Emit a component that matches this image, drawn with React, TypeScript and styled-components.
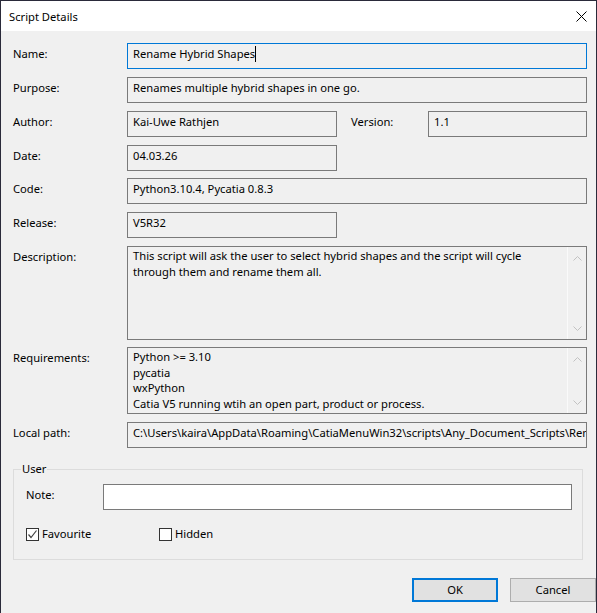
import React from "react";
import styled, { createGlobalStyle } from "styled-components";

const GlobalStyle = createGlobalStyle`
  html, body {
    margin: 0;
    padding: 0;
    background: #2a2a3a;
  }
  body {
    font-family: "Noto Sans", "Open Sans", sans-serif;
    font-size: 11.2px;
    color: #000;
  }
`;

const Window = styled.div`
  width: 597px;
  height: 613px;
  box-sizing: border-box;
  border: 1px solid #2a2a3a;
  border-bottom: none;
  background: #f0f0f0;
  display: flex;
  flex-direction: column;
  overflow: hidden;
`;

const TitleBar = styled.div`
  height: 30px;
  background: #fff;
  display: flex;
  align-items: center;
  justify-content: space-between;
  padding: 0 9px 0 8px;
  flex-shrink: 0;
`;

const Title = styled.span`
  line-height: 16px;
  padding-top: 1px;
`;

const CloseButton = styled.div`
  width: 12px;
  height: 12px;
  display: flex;
  align-items: center;
  justify-content: center;
`;

const Body = styled.div`
  padding: 12px 9px 0 12px;
  display: flex;
  flex-direction: column;
  gap: 8px;
`;

const Row = styled.div<{ $shift?: number }>`
  display: grid;
  grid-template-columns: 114px 1fr;
  align-items: start;
  ${(p) => (p.$shift ? `margin-top: ${p.$shift}px;` : "")}
`;

const Label = styled.div<{ $width?: number; $offset?: number }>`
  padding-top: 3px;
  line-height: 16px;
  white-space: nowrap;
  ${(p) => (p.$width ? `width: ${p.$width}px; flex-shrink: 0;` : "")}
  ${(p) => (p.$offset ? `margin-left: ${p.$offset}px;` : "")}
`;

const Inline = styled.div`
  display: flex;
  align-items: start;
`;

const Field = styled.div<{ $width?: number; $focused?: boolean; $white?: boolean }>`
  box-sizing: border-box;
  height: 26px;
  ${(p) => (p.$width ? `width: ${p.$width}px; flex-shrink: 0;` : "flex: 1;")}
  border: 1px solid ${(p) => (p.$focused ? "#0078d7" : "#7a7a7a")};
  background: ${(p) => (p.$white ? "#fff" : "#f0f0f0")};
  padding: 2px 5px;
  line-height: 16px;
  white-space: nowrap;
  overflow: hidden;
`;

const Caret = styled.span`
  display: inline-block;
  width: 1px;
  height: 16px;
  background: #000;
  vertical-align: top;
`;

const TextArea = styled.div<{ $height: number }>`
  box-sizing: border-box;
  height: ${(p) => p.$height}px;
  border: 1px solid #7a7a7a;
  display: flex;
`;

const TextBody = styled.div`
  flex: 1;
  padding: 1px 5px;
  line-height: 15.5px;
  white-space: pre-line;
  overflow: hidden;
`;

const ScrollTrack = styled.div`
  width: 18px;
  border-left: 1px solid #fafafa;
  display: flex;
  flex-direction: column;
  justify-content: space-between;
  align-items: center;
  padding: 9px 0 8px;
`;

const GroupBox = styled.fieldset`
  margin: 5px 4px 0 0;
  padding: 7px 10px 17px 12px;
  border: 1px solid #dcdcdc;
  display: flex;
  flex-direction: column;
  gap: 16px;
`;

const Legend = styled.legend`
  padding: 0 1px;
  margin-left: -5px;
  line-height: 16px;
`;

const NoteRow = styled.div`
  display: grid;
  grid-template-columns: 77px 1fr;
  align-items: start;
`;

const CheckRow = styled.div`
  display: flex;
  align-items: center;
  height: 16px;
`;

const CheckItem = styled.label<{ $width?: number }>`
  display: flex;
  align-items: center;
  gap: 3px;
  ${(p) => (p.$width ? `width: ${p.$width}px;` : "")}
  line-height: 16px;
`;

const Box = styled.span`
  box-sizing: border-box;
  width: 13px;
  height: 13px;
  border: 1px solid #333;
  background: #fff;
  display: flex;
  align-items: center;
  justify-content: center;
`;

const Footer = styled.div`
  display: flex;
  justify-content: flex-end;
  gap: 12px;
  margin: 10px -9px 0 0;
`;

const Button = styled.div<{ $primary?: boolean }>`
  box-sizing: border-box;
  width: 86px;
  height: 24px;
  background: #e1e1e1;
  border: ${(p) => (p.$primary ? "2px solid #0078d7" : "1px solid #adadad")};
  display: flex;
  align-items: center;
  justify-content: center;
  line-height: 16px;
`;

const Chevron = ({ down }: { down?: boolean }) => (
  <svg width="9" height="5" viewBox="0 0 9 5">
    <polyline
      points={down ? "0.5,0.5 4.5,4.5 8.5,0.5" : "0.5,4.5 4.5,0.5 8.5,4.5"}
      fill="none"
      stroke="#c2c2c2"
      strokeWidth="1"
    />
  </svg>
);

const Scroll = () => (
  <ScrollTrack>
    <Chevron />
    <Chevron down />
  </ScrollTrack>
);

export default function App() {
  return (
    <>
      <GlobalStyle />
      <Window>
        <TitleBar>
          <Title>Script Details</Title>
          <CloseButton>
            <svg width="11" height="11" viewBox="0 0 11 11">
              <path d="M0.5 0.5 L10.5 10.5 M10.5 0.5 L0.5 10.5" stroke="#000" strokeWidth="1" />
            </svg>
          </CloseButton>
        </TitleBar>
        <Body>
          <Row>
            <Label>Name:</Label>
            <Field $focused>
              Rename Hybrid Shapes<Caret />
            </Field>
          </Row>
          <Row>
            <Label>Purpose:</Label>
            <Field>Renames multiple hybrid shapes in one go.</Field>
          </Row>
          <Row>
            <Label>Author:</Label>
            <Inline>
              <Field $width={210}>Kai-Uwe Rathjen</Field>
              <Label $width={77} $offset={14}>Version:</Label>
              <Field>1.1</Field>
            </Inline>
          </Row>
          <Row>
            <Label>Date:</Label>
            <Inline>
              <Field $width={210}>04.03.26</Field>
            </Inline>
          </Row>
          <Row $shift={-1}>
            <Label>Code:</Label>
            <Field>Python3.10.4, Pycatia 0.8.3</Field>
          </Row>
          <Row>
            <Label>Release:</Label>
            <Inline>
              <Field $width={210}>V5R32</Field>
            </Inline>
          </Row>
          <Row>
            <Label>Description:</Label>
            <TextArea $height={94}>
              <TextBody>
                {"This script will ask the user to select hybrid shapes and the script will cycle\nthrough them and rename them all."}
              </TextBody>
              <Scroll />
            </TextArea>
          </Row>
          <Row $shift={-1}>
            <Label>Requirements:</Label>
            <TextArea $height={67}>
              <TextBody>
                {"Python >= 3.10\npycatia\nwxPython\nCatia V5 running wtih an open part, product or process."}
              </TextBody>
              <Scroll />
            </TextArea>
          </Row>
          <Row>
            <Label>Local path:</Label>
            <Field>
              C:\Users\kaira\AppData\Roaming\CatiaMenuWin32\scripts\Any_Document_Scripts\Rename_Hybrid_Shapes.py
            </Field>
          </Row>
          <GroupBox>
            <Legend>User</Legend>
            <NoteRow>
              <Label>Note:</Label>
              <Field $white />
            </NoteRow>
            <CheckRow>
              <CheckItem $width={133}>
                <Box>
                  <svg width="11" height="11" viewBox="0 0 11 11">
                    <polyline points="1.5,5.5 4,8.5 9.5,1.5" fill="none" stroke="#444" strokeWidth="1.2" />
                  </svg>
                </Box>
                Favourite
              </CheckItem>
              <CheckItem>
                <Box />
                Hidden
              </CheckItem>
            </CheckRow>
          </GroupBox>
          <Footer>
            <Button $primary>OK</Button>
            <Button>Cancel</Button>
          </Footer>
        </Body>
      </Window>
    </>
  );
}
